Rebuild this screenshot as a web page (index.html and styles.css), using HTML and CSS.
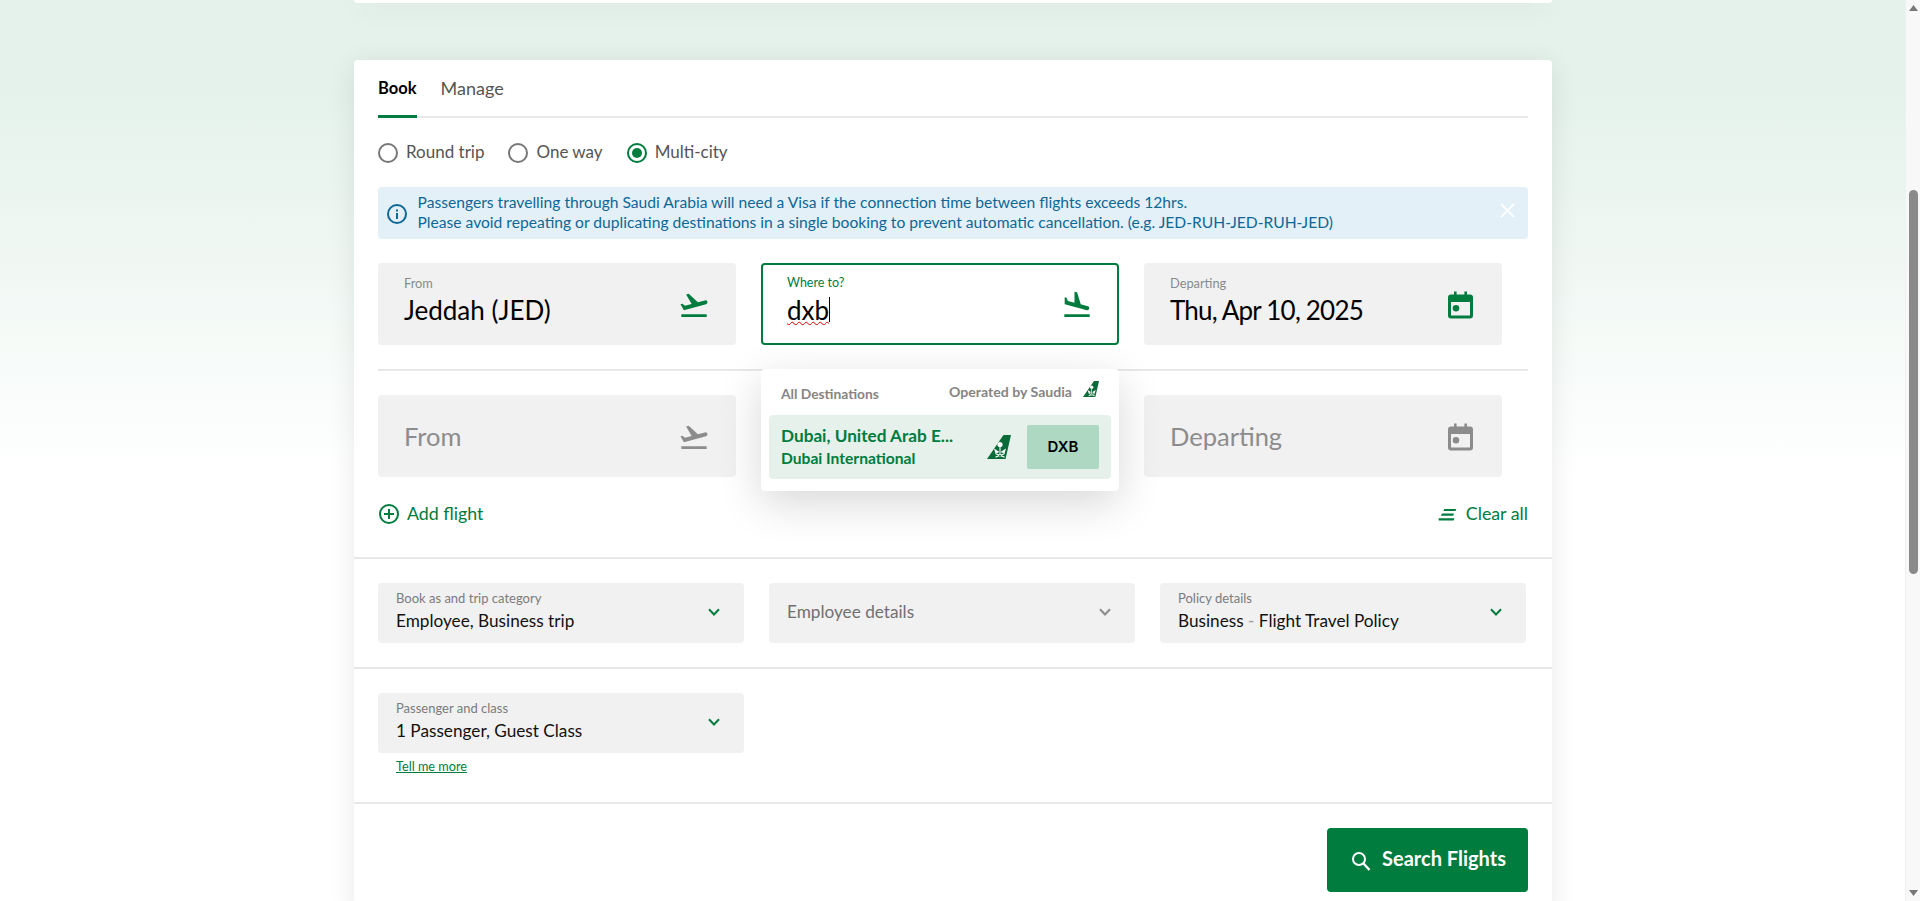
FILE: index.html
```html
<!DOCTYPE html>
<html lang="en">
<head>
<meta charset="utf-8">
<title>Book flights</title>
<link rel="stylesheet" href="styles.css">
</head>
<body>
<svg class="defs" width="0" height="0" aria-hidden="true">
  <symbol id="takeoff" viewBox="0 0 24 24"><path d="M2.5 19h19v2h-19v-2zm19.57-9.36c-.21-.8-1.04-1.28-1.84-1.06L14.92 10l-6.9-6.43-1.93.51 4.14 7.17-4.97 1.33-1.97-1.54-1.45.39 2.59 4.49L21 11.49c.81-.23 1.28-1.05 1.07-1.85z"/></symbol>
  <symbol id="landing" viewBox="0 0 24 24"><path d="M2.5 19h19v2h-19v-2zm7.18-5.73l4.35 1.16 5.31 1.42c.8.21 1.62-.26 1.84-1.06.21-.8-.26-1.62-1.06-1.84l-5.31-1.42-2.76-9.02L10.12 2v8.28L5.15 8.95l-.93-2.32-1.45-.39v5.17l1.6.43 5.31 1.43z"/></symbol>
  <symbol id="calendar" viewBox="0 0 25 27"><path fill-rule="evenodd" d="M6 0h2.6v3h7.8V0H19v3h3a3 3 0 0 1 3 3v18a3 3 0 0 1-3 3H3a3 3 0 0 1-3-3V6a3 3 0 0 1 3-3h3zM3 10.500V23.500a.5.5 0 0 0 .5.5h18a.5.5 0 0 0 .5-.5V10.500zM8 13.500a3.300 3.300 0 1 1 0 6.600a3.300 3.300 0 1 1 0-6.600z"/></symbol>
  <symbol id="chevron" viewBox="0 0 12 8"><path d="M1 1.200l5 5.300 5-5.300" fill="none" stroke="currentColor" stroke-width="2"/></symbol>
  <symbol id="tail" viewBox="0 0 24 24"><path d="M16.500 0H24l-5.500 24H0z"/><g fill="#fff"><circle cx="13" cy="9.500" r="2.600"/><path d="M12.500 12h1v8h-1z"/><path d="M7 13.500l5.500 3.500-4 1.500zM19 13.500l-5.500 3.500 4 1.500z"/><path d="M8.500 21.500l9-3.500v1.300l-9 3.500zM17.500 21.500l-9-3.500v1.300l9 3.500z"/></g></symbol>
</svg>
<div class="app">
  <main class="page">
    <div class="top-card"></div>
    <section class="card">
      <div class="section">
        <div class="tabs">
          <span class="tab active">Book</span>
          <span class="tab">Manage</span>
        </div>
        <div class="radios">
          <label class="radio"><span class="dot"></span><span class="radio-text">Round trip</span></label>
          <label class="radio"><span class="dot"></span><span class="radio-text">One way</span></label>
          <label class="radio"><span class="dot on"></span><span class="radio-text">Multi-city</span></label>
        </div>
        <div class="info">
          <svg class="info-icon" viewBox="0 0 20 20"><circle cx="10" cy="10" r="9" fill="none" stroke="currentColor" stroke-width="2"/><rect x="9" y="9" width="2" height="6"/><rect x="9" y="5.500" width="2" height="2"/></svg>
          <p class="info-text">Passengers travelling through Saudi Arabia will need a Visa if the connection time between flights exceeds 12hrs.<br>Please avoid repeating or duplicating destinations in a single booking to prevent automatic cancellation. (e.g. JED-RUH-JED-RUH-JED)</p>
          <svg class="info-close" viewBox="0 0 16 16"><path d="M1 1l14 14M15 1L1 15" stroke="#fff" stroke-width="2"/></svg>
        </div>
        <div class="flight-row">
          <div class="field">
            <div class="field-text"><span class="field-label">From</span><span class="field-value">Jeddah (JED)</span></div>
            <svg class="icon green"><use href="#takeoff"/></svg>
          </div>
          <div class="field-wrap">
            <div class="field focused">
              <div class="field-text"><span class="field-label green">Where to?</span><span class="field-value"><span class="typo">dxb</span><span class="caret"></span></span></div>
              <svg class="icon green"><use href="#landing"/></svg>
            </div>
            <div class="dropdown">
              <div class="dd-head">
                <span class="dd-all">All Destinations</span>
                <span class="dd-op">Operated by Saudia<svg class="tail-small"><use href="#tail"/></svg></span>
              </div>
              <div class="dd-row">
                <div class="dd-names"><span class="dd-city">Dubai, United Arab E...</span><span class="dd-airport">Dubai International</span></div>
                <svg class="tail-big"><use href="#tail"/></svg>
                <span class="dd-code">DXB</span>
              </div>
            </div>
          </div>
          <div class="field">
            <div class="field-text"><span class="field-label">Departing</span><span class="field-value date">Thu, Apr 10, 2025</span></div>
            <svg class="icon-cal green"><use href="#calendar"/></svg>
          </div>
        </div>
        <hr class="row-line">
        <div class="flight-row">
          <div class="field"><span class="field-ph">From</span><svg class="icon grey"><use href="#takeoff"/></svg></div>
          <div class="field"></div>
          <div class="field"><span class="field-ph">Departing</span><svg class="icon-cal grey"><use href="#calendar"/></svg></div>
        </div>
        <div class="actions">
          <span class="action"><svg class="add-icon" viewBox="0 0 20 20"><circle cx="10" cy="10" r="9" fill="none" stroke="currentColor" stroke-width="2"/><path d="M10 5v10M5 10h10" stroke="currentColor" stroke-width="2"/></svg>Add flight</span>
          <span class="action"><svg class="clear-icon" viewBox="0 0 19 15"><path d="M6 1h13l-1 2.200H5zM3.500 6h13l-1 2.200h-13zM0 11h17l-1 2.500H0z"/></svg>Clear all</span>
        </div>
      </div>
      <div class="section-line">
        <div class="select-row">
          <div class="select"><div class="field-text sel-text"><span class="sel-label">Book as and trip category</span><span class="sel-value">Employee, Business trip</span></div><svg class="chev green"><use href="#chevron"/></svg></div>
          <div class="select"><span class="sel-ph">Employee details</span><svg class="chev grey"><use href="#chevron"/></svg></div>
          <div class="select"><div class="field-text sel-text"><span class="sel-label">Policy details</span><span class="sel-value">Business <span class="sep">-</span> Flight Travel Policy</span></div><svg class="chev green"><use href="#chevron"/></svg></div>
        </div>
      </div>
      <div class="section-line pax">
        <div class="select-row">
          <div class="select"><div class="field-text sel-text"><span class="sel-label">Passenger and class</span><span class="sel-value">1 Passenger, Guest Class</span></div><svg class="chev green"><use href="#chevron"/></svg></div>
        </div>
        <a class="more" href="#">Tell me more</a>
      </div>
      <div class="section-line submit">
        <button class="search" type="button"><svg class="search-icon" viewBox="0 0 20 20"><circle cx="8" cy="8" r="6" fill="none" stroke="#fff" stroke-width="2"/><path d="M12.500 12.500L18.500 19" stroke="#fff" stroke-width="2.400"/></svg>Search Flights</button>
      </div>
    </section>
  </main>
  <aside class="scrollbar">
    <svg class="sb-arrow" viewBox="0 0 9 6"><path d="M4.500 0L9 6H0z"/></svg>
    <div class="sb-track"><div class="sb-thumb"></div></div>
    <svg class="sb-arrow" viewBox="0 0 9 6"><path d="M0 0h9L4.500 6z"/></svg>
  </aside>
</div>
</body>
</html>
```
FILE: styles.css
```css
* { box-sizing: border-box; }
html, body { margin: 0; height: 100%; overflow: hidden; }
body { font-family: Lato, "Noto Sans", sans-serif; color: #000; background: #fff; }
.defs { display: block; height: 0; }
.app { display: flex; height: 901px; }
.page {
  flex: 1;
  height: 901px;
  overflow: hidden;
  padding: 0 353px 0 354px;
  background: linear-gradient(#e5f2eb 100px, #ffffff 480px);
}
.top-card {
  height: 3px;
  margin-bottom: 57px;
  background: #fff;
  border-radius: 0 0 4px 4px;
  box-shadow: 0 4px 24px rgba(0, 0, 0, .16);
}
.card {
  background: #fff;
  border-radius: 4px;
  box-shadow: 0 4px 28px rgba(0, 0, 0, .09);
}
.section { padding: 0 24px; }
.tabs { display: flex; gap: 24px; height: 58px; border-bottom: 2px solid #e8e8e8; }
.tab { height: 58px; padding-top: 16px; font-size: 18px; line-height: 24px; color: #555; border-bottom: 3px solid transparent; }
.tab.active { color: #000; font-size: 16.500px; font-weight: 700; border-bottom-color: #007c3e; }
.radios { display: flex; gap: 24px; margin-top: 25px; height: 20px; }
.radio { display: flex; align-items: center; gap: 8px; font-size: 17px; color: #555; }
.radio-text { margin-top: -4px; }
.dot { width: 20px; height: 20px; border: 2px solid #777; border-radius: 50%; display: flex; align-items: center; justify-content: center; }
.dot.on { border-color: #007c3e; }
.dot.on::after { content: ""; width: 10px; height: 10px; border-radius: 50%; background: #007c3e; }
.info { display: flex; align-items: center; height: 52px; margin-top: 24px; padding: 0 13px 0 9px; background: #e3f0f8; border-radius: 4px; color: #0f6796; }
.info-icon { width: 20px; height: 20px; fill: currentColor; flex: none; margin-top: 2px; }
.info-text { margin: 0 0 2px 10.500px; font-size: 15.640px; line-height: 20px; flex: 1; white-space: nowrap; }
.info-close { width: 15px; height: 15px; flex: none; align-self: flex-start; margin-top: 16px; }
.flight-row { display: flex; gap: 25px; margin-top: 24px; }
.row-line { height: 2px; margin: 24px 0; border: 0; background: #e8e8e8; }
.row-line + .flight-row { margin-top: 0; }
.field { width: 358px; height: 82px; padding: 0 26px; display: flex; align-items: center; justify-content: space-between; background: #f1f1f1; border-radius: 4px; }
.field-wrap { position: relative; width: 358px; }
.field.focused { background: #fff; border: 2px solid #007c3e; padding: 0 24px; }
.field-text { display: flex; flex-direction: column; padding-bottom: 7.500px; }
.field-label { font-size: 12.800px; line-height: 18px; color: #8a8a8a; }
.field-label.green { color: #007c3e; font-size: 12.500px; }
.field-value { font-size: 26px; line-height: 34px; margin-top: .5px; display: flex; align-items: center; }
.field-value.date { letter-spacing: -.8px; }
.field-ph { font-size: 25.500px; color: #8c8c8c; }
.typo { text-decoration: underline wavy #e00000 1px; text-underline-offset: 1px; text-decoration-skip-ink: none; }
.caret { width: 1px; height: 25px; background: #000; }
.icon { width: 32px; height: 32px; margin-top: 2px; flex: none; }
.icon-cal { width: 25px; height: 28px; margin: 1px 3px 0 0; flex: none; }
.green { color: #007c3e; fill: #007c3e; }
.grey { color: #8c8c8c; fill: #8c8c8c; }
.dropdown { position: absolute; z-index: 2; top: 106px; left: 0; width: 358px; height: 122px; padding: 0 8px; background: #fff; border-radius: 4px; box-shadow: 0 12px 44px rgba(0, 0, 0, .16); }
.dd-head { display: flex; justify-content: space-between; height: 46px; padding: 12px 12px 0; font-size: 14.100px; font-weight: 700; color: #858585; }
.dd-all { margin-top: 4px; font-size: 13.800px; }
.dd-op { display: flex; align-items: flex-start; gap: 11px; padding-top: 2px; }
.tail-small { width: 16px; height: 16px; margin-top: -2px; fill: #0a6b38; }
.dd-row { display: flex; align-items: center; height: 64px; padding: 0 12px; background: #e5f1ea; border-radius: 4px; }
.dd-names { display: flex; flex-direction: column; flex: 1; color: #007c3e; font-weight: 700; padding-bottom: 2px; }
.dd-city { font-size: 17.200px; line-height: 24px; }
.dd-airport { font-size: 15.600px; line-height: 20px; }
.tail-big { width: 24px; height: 24px; margin-right: 16px; fill: #0a6b38; }
.dd-code { width: 72px; height: 44px; padding-bottom: 2px; display: flex; align-items: center; justify-content: center; background: #aed8c2; border-radius: 2px; font: 600 15px Inter, sans-serif; color: #000; }
.actions { display: flex; justify-content: space-between; align-items: center; height: 80px; padding-bottom: 9px; color: #007c3e; font-size: 17.800px; }
.action { display: flex; align-items: center; gap: 8px; }
.add-icon { width: 20px; height: 20px; margin: 3px 0 0 1px; }
.clear-icon { width: 19px; height: 14px; fill: #007c3e; margin: 4px 1px 0 0; }
.section-line { padding: 24px 24px 24px; border-top: 2px solid #e8e8e8; }
.select-row { display: flex; gap: 25px; }
.select { width: 366px; height: 60px; padding: 0 18px; display: flex; align-items: center; justify-content: space-between; background: #f1f1f1; border-radius: 4px; }
.sel-text { padding-bottom: 3.500px; }
.sel-label { font-size: 13px; line-height: 16px; color: #7b7b7b; }
.sel-value { font-size: 17.200px; line-height: 22px; margin-top: 4px; color: #111; }
.sel-ph { font-size: 17.200px; color: #707070; margin-top: -3px; }
.sep { color: #999; }
.chev { width: 12px; height: 8px; margin: 0 6px 3px 0; flex: none; }
.pax { height: 135px; }
.more { display: block; margin: 5px 0 0 18px; font-size: 12.700px; line-height: 16px; color: #007c3e; }
.submit { display: flex; justify-content: flex-end; }
.search { display: flex; align-items: center; justify-content: center; gap: 11px; width: 201px; height: 64px; padding: 0 0 5px; border: 0; border-radius: 4px; background: #007c3e; color: #fff; font: 700 20px Lato, sans-serif; }
.search-icon { width: 20px; height: 20px; margin: 7px 0 0 2px; }
.scrollbar { width: 15px; height: 901px; display: flex; flex-direction: column; align-items: center; background: #f8f8f8; border-left: 1px solid #f0f0f0; }
.sb-arrow { width: 9px; height: 6px; margin: 5px 0; fill: #777; flex: none; }
.sb-track { flex: 1; width: 100%; padding-top: 174px; display: flex; justify-content: center; }
.sb-thumb { width: 9px; height: 384px; background: #8a8a8a; border-radius: 5px; }
```
